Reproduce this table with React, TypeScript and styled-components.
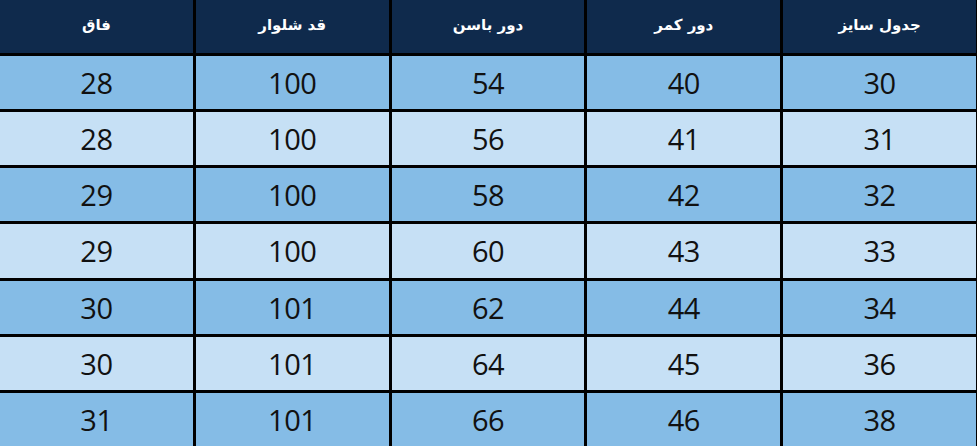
import React from 'react'
import styled, { createGlobalStyle } from 'styled-components'

const GlobalStyle = createGlobalStyle`
  html, body {
    margin: 0;
    padding: 0;
    background: #ffffff;
  }
`

const Table = styled.div`
  direction: rtl;
  width: 977px;
  height: 446px;
  display: grid;
  grid-template-columns: repeat(5, 1fr);
  grid-template-rows: 53px repeat(7, 1fr);
  gap: 3px;
  background: #000;
  border-right: 1px solid #000;
  box-sizing: border-box;
`

const HeadCell = styled.div`
  background: #0f2a4c;
  color: #ffffff;
  display: flex;
  align-items: center;
  justify-content: center;
  font-family: 'DejaVu Sans', 'Noto Sans', sans-serif;
  font-weight: 700;
  font-size: 15px;
  padding-bottom: 4px;
`

const Cell = styled.div<{ $shade: 'dark' | 'light' }>`
  background: ${(p) => (p.$shade === 'dark' ? '#85bce6' : '#c6e0f5')};
  color: #111;
  display: flex;
  align-items: center;
  justify-content: center;
  font-family: 'Open Sans', 'Noto Sans', sans-serif;
  font-size: 29px;
  letter-spacing: -0.5px;
  direction: ltr;
`

const headers = ['جدول سایز', 'دور کمر', 'دور باسن', 'قد شلوار', 'فاق']

const rows = [
  [30, 40, 54, 100, 28],
  [31, 41, 56, 100, 28],
  [32, 42, 58, 100, 29],
  [33, 43, 60, 100, 29],
  [34, 44, 62, 101, 30],
  [36, 45, 64, 101, 30],
  [38, 46, 66, 101, 31],
]

export default function App() {
  return (
    <>
      <GlobalStyle />
      <Table>
        {headers.map((h) => (
          <HeadCell key={h}>{h}</HeadCell>
        ))}
        {rows.map((row, i) =>
          row.map((v, j) => (
            <Cell key={`${i}-${j}`} $shade={i % 2 === 0 ? 'dark' : 'light'}>
              {v}
            </Cell>
          ))
        )}
      </Table>
    </>
  )
}
